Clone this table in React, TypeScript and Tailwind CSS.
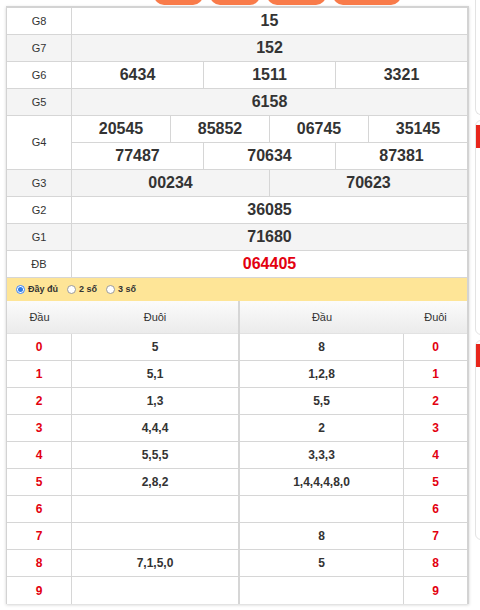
import React from 'react';

const font = { fontFamily: '"Liberation Sans", Arial, sans-serif' };

type Row = { label: string; lines: string[][]; red?: boolean };

const prizes: Row[] = [
  { label: 'G8', lines: [['15']] },
  { label: 'G7', lines: [['152']] },
  { label: 'G6', lines: [['6434', '1511', '3321']] },
  { label: 'G5', lines: [['6158']] },
  { label: 'G4', lines: [['20545', '85852', '06745', '35145'], ['77487', '70634', '87381']] },
  { label: 'G3', lines: [['00234', '70623']] },
  { label: 'G2', lines: [['36085']] },
  { label: 'G1', lines: [['71680']] },
  { label: 'ĐB', lines: [['064405']], red: true },
];

const dau = ['5', '5,1', '1,3', '4,4,4', '5,5,5', '2,8,2', '', '', '7,1,5,0', ''];
const duoi = ['8', '1,2,8', '5,5', '2', '3,3,3', '1,4,4,4,8,0', '', '8', '5', ''];

const Radio = ({ checked }: { checked?: boolean }) => (
  <span
    className={`inline-flex w-[9px] h-[9px] rounded-full border items-center justify-center bg-white ${
      checked ? 'border-[#3b82f6]' : 'border-[#9a9a9a]'
    }`}
  >
    {checked && <span className="w-[5px] h-[5px] rounded-full bg-[#2f7be5]" />}
  </span>
);

const App: React.FC = () => {
  return (
    <div className="w-[480px] h-[610px] overflow-hidden bg-white flex text-[#333]" style={font}>
      {/* main column */}
      <div className="w-[470px] shrink-0">
        {/* orange tabs cut off at the top */}
        <div className="h-[6px] overflow-hidden flex items-end gap-[7px] pl-[154px]">
          {[49, 50, 59, 68].map((w, i) => (
            <div key={i} className="h-[30px] mb-[1px] rounded-[10px] bg-[#f97b4a] shrink-0" style={{ width: w }} />
          ))}
        </div>

        <div className="ml-[6px] w-[463px] border-t-2 border-l border-r-2 border-[#d3d3d3] shadow-[0_1px_3px_rgba(0,0,0,0.18)]">
          {/* results */}
          {prizes.map((p, i) => (
            <div key={p.label} className={`flex border-b border-[#d6d6d6] ${i % 2 === 1 ? 'bg-[#f4f4f4]' : 'bg-white'}`}>
              <div className="w-[65px] shrink-0 border-r border-[#d6d6d6] flex items-center justify-center text-[11px]">
                {p.label}
              </div>
              <div className="flex-1 flex flex-col">
                {p.lines.map((line, j) => (
                  <div key={j} className={`flex h-[26px] ${j > 0 ? 'border-t border-[#d6d6d6] h-[27px]' : ''}`}>
                    {line.map((n, k) => (
                      <div
                        key={k}
                        className={`flex-1 flex items-center justify-center text-[16px] font-bold ${
                          k < line.length - 1 ? 'border-r border-[#d6d6d6]' : ''
                        } ${p.red ? 'text-[#e3000f]' : 'text-[#333]'}`}
                      >
                        {n}
                      </div>
                    ))}
                  </div>
                ))}
              </div>
            </div>
          ))}

          {/* loto mode bar */}
          <div className="h-[23px] bg-[#fee597] flex items-center pl-[9px] text-[9px] font-bold text-[#333]">
            <label className="flex items-center gap-[3px] mr-[9px]">
              <Radio checked /> Đầy đủ
            </label>
            <label className="flex items-center gap-[3px] mr-[9px]">
              <Radio /> 2 số
            </label>
            <label className="flex items-center gap-[3px]">
              <Radio /> 3 số
            </label>
          </div>

          {/* loto tables */}
          <div className="flex">
            <div className="w-[233px] shrink-0 border-r-2 border-[#d6d6d6]">
              <div className="h-[33px] flex items-center border-b border-[#e2e2e2] bg-gradient-to-b from-[#fbfbfb] to-[#ebebeb] text-[11px]">
                <div className="w-[65px] text-center">Đầu</div>
                <div className="flex-1 text-center">Đuôi</div>
              </div>
              {dau.map((v, i) => (
                <div key={i} className={`flex h-[27px] ${i < 9 ? 'border-b border-[#d6d6d6]' : ''}`}>
                  <div className="w-[65px] border-r border-[#d6d6d6] flex items-center justify-center text-[12px] font-bold text-[#e3000f]">
                    {i}
                  </div>
                  <div className="flex-1 flex items-center justify-center text-[12px] font-bold">{v}</div>
                </div>
              ))}
            </div>
            <div className="flex-1">
              <div className="h-[33px] flex items-center border-b border-[#e2e2e2] bg-gradient-to-b from-[#fbfbfb] to-[#ebebeb] text-[11px]">
                <div className="flex-1 text-center">Đầu</div>
                <div className="w-[63px] text-center">Đuôi</div>
              </div>
              {duoi.map((v, i) => (
                <div key={i} className={`flex h-[27px] ${i < 9 ? 'border-b border-[#d6d6d6]' : ''}`}>
                  <div className="flex-1 border-r border-[#d6d6d6] flex items-center justify-center text-[12px] font-bold">
                    {v}
                  </div>
                  <div className="w-[63px] flex items-center justify-center text-[12px] font-bold text-[#e3000f]">{i}</div>
                </div>
              ))}
            </div>
          </div>
        </div>
      </div>

      {/* neighbouring column, mostly off screen */}
      <div className="ml-[5px] w-[40px] shrink-0 flex flex-col">
        <div className="h-[115px] border border-t-0 border-[#e3e3e3] rounded-b-[6px]" />
        <div className="mt-[5px] h-[215px] border border-[#e3e3e3] rounded-[6px] pt-[4px]">
          <div className="h-[23px] bg-[#e8261b]" />
        </div>
        <div className="mt-[5px] h-[200px] border border-[#e3e3e3] rounded-[6px] pt-[3px]">
          <div className="h-[23px] bg-[#e8261b]" />
        </div>
      </div>
    </div>
  );
};

export default App;
